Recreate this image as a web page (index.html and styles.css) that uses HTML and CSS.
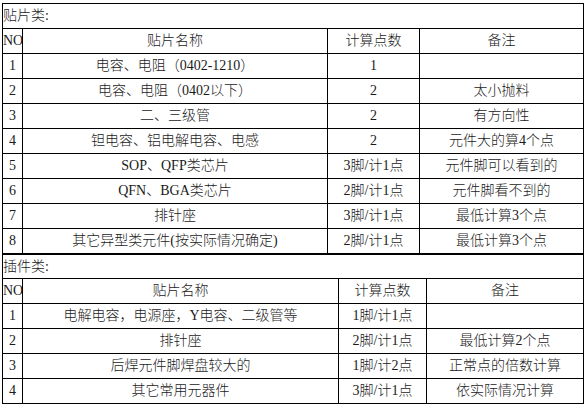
FILE: index.html
```html
<!DOCTYPE html>
<html lang="zh">
<head>
<meta charset="utf-8">
<title>贴片类 / 插件类</title>
<link rel="stylesheet" href="styles.css">
</head>
<body>
<div class="sheet">
  <table class="grid grid-smd">
    <colgroup>
      <col class="c-no"><col class="c-name"><col class="c-calc"><col class="c-note">
    </colgroup>
    <tr><td class="title" colspan="4">贴片类:</td></tr>
    <tr><td>NO</td><td>贴片名称</td><td>计算点数</td><td>备注</td></tr>
    <tr><td>1</td><td>电容、电阻（0402-1210）</td><td>1</td><td></td></tr>
    <tr><td>2</td><td>电容、电阻（0402以下）</td><td>2</td><td>太小抛料</td></tr>
    <tr><td>3</td><td>二、三级管</td><td>2</td><td>有方向性</td></tr>
    <tr><td>4</td><td>钽电容、铝电解电容、电感</td><td>2</td><td>元件大的算4个点</td></tr>
    <tr><td>5</td><td>SOP、QFP类芯片</td><td>3脚/计1点</td><td>元件脚可以看到的</td></tr>
    <tr><td>6</td><td>QFN、BGA类芯片</td><td>2脚/计1点</td><td>元件脚看不到的</td></tr>
    <tr><td>7</td><td>排针座</td><td>3脚/计1点</td><td>最低计算3个点</td></tr>
    <tr class="last"><td>8</td><td>其它异型类元件(按实际情况确定)</td><td>2脚/计1点</td><td>最低计算3个点</td></tr>
  </table>
  <table class="grid grid-tht">
    <colgroup>
      <col class="c-no"><col class="c-name"><col class="c-calc"><col class="c-note">
    </colgroup>
    <tr><td class="title title-open" colspan="4">插件类:</td></tr>
    <tr><td>NO</td><td>贴片名称</td><td>计算点数</td><td>备注</td></tr>
    <tr><td>1</td><td>电解电容，电源座，Y电容、二级管等</td><td>1脚/计1点</td><td></td></tr>
    <tr><td>2</td><td>排针座</td><td>2脚/计1点</td><td>最低计算2个点</td></tr>
    <tr><td>3</td><td>后焊元件脚焊盘较大的</td><td>1脚/计2点</td><td>正常点的倍数计算</td></tr>
    <tr><td>4</td><td>其它常用元器件</td><td>3脚/计1点</td><td>依实际情况计算</td></tr>
  </table>
</div>
</body>
</html>
```
FILE: styles.css
```css
html, body {
  margin: 0;
  padding: 0;
  background: #fff;
}

.sheet {
  padding: 3px 0 0 2px;
  font-family: "Liberation Serif", "Noto Sans CJK SC", serif;
  font-size: 14px;
  font-weight: 300;
  color: #1a1a1a;
}

.grid {
  border-collapse: collapse;
  table-layout: fixed;
  width: 581px;
}

.grid td {
  border: 1px solid #000;
  padding: 0;
  height: 24px;
  line-height: 16px;
  text-align: center;
  vertical-align: middle;
  white-space: nowrap;
  overflow: hidden;
}

.grid td.title {
  text-align: left;
  padding-left: 0;
}

.grid-smd .c-no { width: 20px; }
.grid-smd .c-name { width: 305px; }
.grid-smd .c-calc { width: 92px; }
.grid-smd .c-note { width: 164px; }

.grid-tht .c-no { width: 20px; }
.grid-tht .c-name { width: 316px; }
.grid-tht .c-calc { width: 88px; }
.grid-tht .c-note { width: 157px; }

.grid-smd tr.last td {
  border-bottom: 2px solid #000;
}

.grid-tht td.title-open {
  border-top: 0;
  height: 23px;
}
```
